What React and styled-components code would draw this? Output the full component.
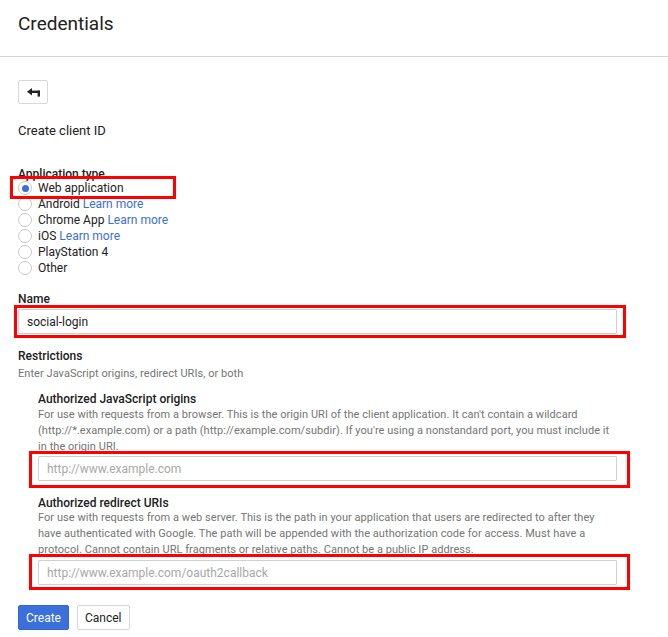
import React from 'react'
import styled, { createGlobalStyle } from 'styled-components'

const Global = createGlobalStyle`
body{
  margin:0;
  background:#fff;
  font-family: Roboto, "Liberation Sans", Arial, sans-serif;
  color:#212121;
}
`

const Header = styled.div`
height:57px;
border-bottom:1px solid #d6d6d6;
padding-left:18px;
display:flex;
align-items:center;
box-sizing:border-box;
padding-bottom:10px;
`

const Title = styled.h1`
margin:0;
font-size:19px;
font-weight:400;
color:#212121;
`

const Main = styled.div`
padding:23px 18px 0 18px;
`

const BackButton = styled.button`
width:30px;
height:24px;
border:1px solid #d9d9d9;
border-radius:2px;
background:#fff;
display:flex;
align-items:center;
justify-content:center;
padding:0;
`

const SubTitle = styled.div`
font-size:13px;
margin-top:19px;
line-height:16px;
`

const Label = styled.div`
font-size:12px;
font-weight:500;
line-height:14px;
color:#212121;
margin-top:${p => p.$top || 0}px;
`

const Help = styled.div`
font-size:11px;
letter-spacing:0.05px;
line-height:16px;
color:#757575;
margin-top:${p => p.$top || 0}px;
`

const RadioList = styled.div`
display:flex;
flex-direction:column;
margin-top:-1px;
`

const RadioRow = styled.label`
display:flex;
align-items:center;
height:16px;
font-size:12px;
color:#212121;
width:max-content;
`

const Circle = styled.span`
width:12px;
height:12px;
border-radius:50%;
border:1px solid #c8c8c8;
background:#fff;
margin-right:6px;
display:flex;
align-items:center;
justify-content:center;
box-sizing:content-box;
&::after{
  content:'';
  width:7px;
  height:7px;
  border-radius:50%;
  background:${p => p.$checked ? '#3b6fd6' : 'transparent'};
}
`

const Link = styled.a`
color:#3b6fd6;
text-decoration:none;
margin-left:3px;
`

const Highlight = styled.div`
position:relative;
width:${p => p.$fit ? 'max-content' : 'auto'};
&::after{
  content:'';
  position:absolute;
  top:${p => p.$t}px;
  bottom:${p => p.$b}px;
  left:${p => p.$l}px;
  right:${p => p.$r}px;
  border:3px solid #f00;
  pointer-events:none;
}
`

const Input = styled.input`
display:block;
width:100%;
height:25px;
box-sizing:border-box;
border:1px solid #d0d0d0;
border-radius:1px;
padding:0 8px;
font-family:inherit;
font-size:12px;
color:#212121;
outline:none;
&::placeholder{
  color:#a8a8a8;
}
`

const Field = styled.div`
width:599px;
margin-top:${p => p.$top || 0}px;
`

const Indent = styled.div`
padding-left:20px;
width:580px;
`

const IndentField = styled.div`
width:579px;
margin-top:${p => p.$top || 0}px;
`

const Actions = styled.div`
display:flex;
gap:8px;
margin-top:20px;
`

const Button = styled.button`
height:25px;
padding:0 7px;
min-width:51px;
font-family:inherit;
font-size:12px;
border-radius:2px;
border:1px solid ${p => p.$primary ? '#3367d6' : '#d6d6d6'};
background:${p => p.$primary ? '#3b6fd9' : '#fff'};
color:${p => p.$primary ? '#fff' : '#212121'};
`

const BackIcon = () => (
  <svg width="13" height="9" viewBox="0 0 13 9">
    <path d="M0 3.8 L5 0 L5 7.6 Z" fill="#222" />
    <rect x="4" y="2.6" width="9" height="2.4" fill="#222" />
    <rect x="10.6" y="2.6" width="2.4" height="6" fill="#222" />
  </svg>
)

const types = [
  { name: 'Web application', checked: true },
  { name: 'Android', link: true },
  { name: 'Chrome App', link: true },
  { name: 'iOS', link: true },
  { name: 'PlayStation 4' },
  { name: 'Other' },
]

const App = () => {
  return (
    <>
      <Global />
      <Header>
        <Title>Credentials</Title>
      </Header>
      <Main>
        <BackButton><BackIcon /></BackButton>
        <SubTitle>Create client ID</SubTitle>
        <Label $top={28}>Application type</Label>
        <RadioList>
          {types.map(t => {
            const row = (
              <RadioRow key={t.name}>
                <Circle $checked={t.checked} />
                {t.name}
                {t.link && <Link href="#">Learn more</Link>}
              </RadioRow>
            )
            return t.checked
              ? <Highlight key={t.name} $fit $t={-4} $b={-3} $l={-8} $r={-52}>{row}</Highlight>
              : row
          })}
        </RadioList>
        <Label $top={16}>Name</Label>
        <Field $top={3}>
          <Highlight $t={-4} $b={-4} $l={-4} $r={-9}>
            <Input defaultValue="social-login" />
          </Highlight>
        </Field>
        <Label $top={15}>Restrictions</Label>
        <Help $top={3}>Enter JavaScript origins, redirect URIs, or both</Help>
        <Indent>
          <Label $top={10}>Authorized JavaScript origins</Label>
          <Help $top={1}>For use with requests from a browser. This is the origin URI of the client application. It can't contain a wildcard (http://*.example.com) or a path (http://example.com/subdir). If you're using a nonstandard port, you must include it in the origin URI.</Help>
          <IndentField $top={1}>
            <Highlight $t={-5} $b={-7} $l={-9} $r={-13}>
              <Input placeholder="http://www.example.com" />
            </Highlight>
          </IndentField>
          <Label $top={15}>Authorized redirect URIs</Label>
          <Help>For use with requests from a web server. This is the path in your application that users are redirected to after they have authenticated with Google. The path will be appended with the authorization code for access. Must have a protocol. Cannot contain URL fragments or relative paths. Cannot be a public IP address.</Help>
          <IndentField $top={2}>
            <Highlight $t={-6} $b={-5} $l={-9} $r={-13}>
              <Input placeholder="http://www.example.com/oauth2callback" />
            </Highlight>
          </IndentField>
        </Indent>
        <Actions>
          <Button $primary>Create</Button>
          <Button>Cancel</Button>
        </Actions>
      </Main>
    </>
  )
}

export default App
